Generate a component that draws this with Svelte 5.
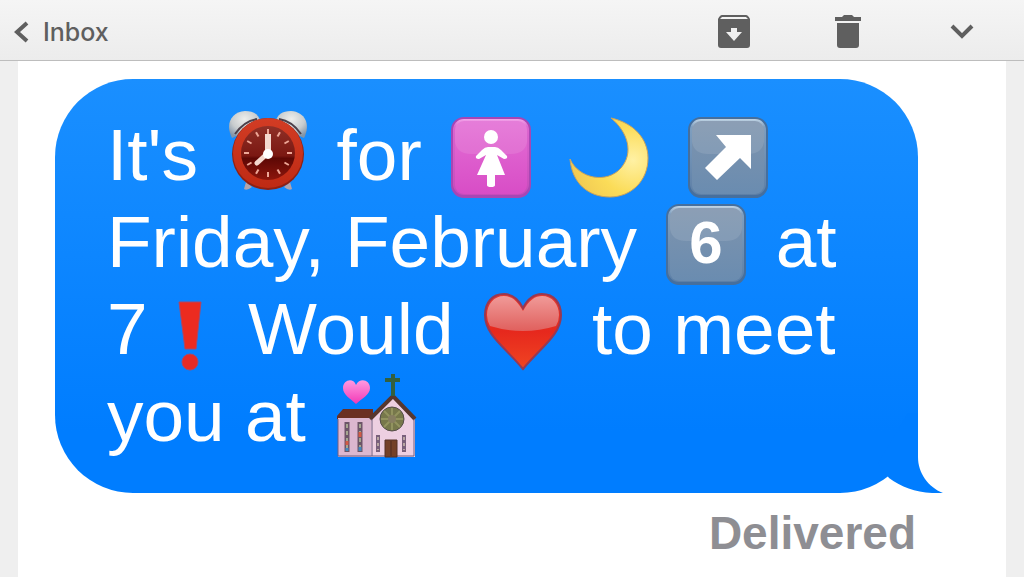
<script lang="ts">
type TileKind = "pink" | "slate";
</script>

{#snippet tile(kind: TileKind)}
    <rect x="8" y="1" width="80" height="81" rx="13" fill={kind === "pink" ? "#a746b5" : "#466f9d"} />
    <rect x="10" y="3" width="76" height="76" rx="11" fill="url(#{kind}-border)" />
    <rect x="12" y="5" width="72" height="73" rx="9" fill="url(#{kind}-fill)" />
    <path d="M21 5H75Q84 5 84 14V26Q82 38 68 38H28Q14 38 12 26V14Q12 5 21 5Z" fill="#fff" opacity="0.1" />
{/snippet}

<svg class="defs" width="0" height="0" aria-hidden="true">
    <defs>
        <linearGradient id="pink-border" x2="0" y2="1">
            <stop offset="0" stop-color="#f3a6ea" />
            <stop offset="0.1" stop-color="#dc66d0" />
            <stop offset="1" stop-color="#c64bbb" />
        </linearGradient>
        <linearGradient id="pink-fill" x2="0" y2="1">
            <stop offset="0" stop-color="#e36fd5" />
            <stop offset="1" stop-color="#d84dc6" />
        </linearGradient>
        <linearGradient id="slate-border" x2="0" y2="1">
            <stop offset="0" stop-color="#c2d5e5" />
            <stop offset="0.1" stop-color="#7f9fc0" />
            <stop offset="1" stop-color="#5d7fa6" />
        </linearGradient>
        <linearGradient id="slate-fill" x2="0" y2="1">
            <stop offset="0" stop-color="#7f94ad" />
            <stop offset="1" stop-color="#6a8cb0" />
        </linearGradient>
        <radialGradient id="bell" cx="0.5" cy="0.3" r="0.7">
            <stop offset="0" stop-color="#eeeeec" />
            <stop offset="0.6" stop-color="#c8ccce" />
            <stop offset="1" stop-color="#8395a8" />
        </radialGradient>
        <linearGradient id="clock-rim" x2="0" y2="1">
            <stop offset="0" stop-color="#d23c24" />
            <stop offset="1" stop-color="#bf2a14" />
        </linearGradient>
        <linearGradient id="clock-face" x2="0" y2="1">
            <stop offset="0" stop-color="#8f3027" />
            <stop offset="0.55" stop-color="#7b1812" />
            <stop offset="0.6" stop-color="#5d0805" />
            <stop offset="1" stop-color="#8d160c" />
        </linearGradient>
        <radialGradient id="moon" gradientUnits="userSpaceOnUse" cx="72" cy="44" r="68">
            <stop offset="0" stop-color="#fff1a4" />
            <stop offset="0.5" stop-color="#fbdc58" />
            <stop offset="1" stop-color="#eec552" />
        </radialGradient>
        <linearGradient id="heart" x2="0" y2="1">
            <stop offset="0" stop-color="#e33a31" />
            <stop offset="0.5" stop-color="#e6281d" />
            <stop offset="1" stop-color="#f04522" />
        </linearGradient>
        <linearGradient id="heart-shine" x2="0" y2="1">
            <stop offset="0" stop-color="#f09a98" />
            <stop offset="1" stop-color="#e0605d" />
        </linearGradient>
        <linearGradient id="love" x2="0" y2="1">
            <stop offset="0" stop-color="#ff9ae0" />
            <stop offset="1" stop-color="#f238b6" />
        </linearGradient>
    </defs>
</svg>

<div class="mail">
    <header class="toolbar">
        <a class="back" href="#inbox">
            <svg width="15" height="22" viewBox="0 0 15 22" aria-hidden="true">
                <path d="M13 2L3 11L13 20" fill="none" stroke="#5f5f5f" stroke-width="4" />
            </svg>
            <span>Inbox</span>
        </a>
        <div class="actions">
            <button type="button" aria-label="Archive">
                <svg width="34" height="34" viewBox="0 0 34 34">
                    <path
                        fill="#5f5f5f"
                        fill-rule="evenodd"
                        d="M5 0H29Q31 0 33 4V30Q33 33 30 33H4Q1 33 1 30V4Q3 0 5 0ZM5 2L3 4H31L29 2ZM14 13V17H9L17 26L25 17H20V13Z"
                    />
                </svg>
            </button>
            <button type="button" aria-label="Delete">
                <svg width="26" height="34" viewBox="0 0 26 34">
                    <path
                        fill="#5f5f5f"
                        d="M0 2H7L9 0H17L19 2H26V6H0ZM2 8H24V30Q24 33 21 33H5Q2 33 2 30Z"
                    />
                </svg>
            </button>
            <button type="button" aria-label="More">
                <svg width="24" height="16" viewBox="0 0 24 16">
                    <path d="M2 2L12 12L22 2" fill="none" stroke="#5f5f5f" stroke-width="4" />
                </svg>
            </button>
        </div>
    </header>

    <main class="page">
        <div class="bubble">
            <p>
                It's
                <svg class="emoji" viewBox="0 0 96 80" role="img" aria-label="alarm clock">
                    <path d="M27 66L25 73Q28 75 33 71ZM71 66L73 73Q70 75 65 71Z" fill="#b3a4ad" />
                    <path d="M13 22C6 8 12-4 26-5C35-5 40-1 41 5L22 18Z" fill="url(#bell)" />
                    <path d="M85 22C92 8 86-4 72-5C63-5 58-1 57 5L76 18Z" fill="url(#bell)" />
                    <path d="M16 18Q25 5 38 3M82 18Q73 5 60 3" fill="none" stroke="#4c404a" stroke-width="2" />
                    <circle cx="49" cy="38" r="36" fill="#8f2013" />
                    <circle cx="49" cy="37" r="35" fill="url(#clock-rim)" />
                    <circle cx="49" cy="37" r="27" fill="url(#clock-face)" />
                    <g stroke="#eea797" stroke-width="2">
                        {#each Array(12) as _, i}
                            <path d="M49 13V18" transform="rotate({i * 30} 49 37)" />
                        {/each}
                    </g>
                    <path d="M49 38V18" stroke="#f4d9cf" stroke-width="6" />
                    <path d="M49 37L38 47" stroke="#f4d9cf" stroke-width="5" stroke-linecap="round" />
                    <circle cx="49" cy="38" r="5" fill="#fff" />
                </svg>
                for
                <svg class="emoji" viewBox="0 0 96 80" role="img" aria-label="women">
                    {@render tile("pink")}
                    <circle cx="48" cy="21" r="7" fill="#fff" />
                    <path
                        fill="#fff"
                        d="M45 31H52Q55 31 58 34L64 40Q65 43 61 43L54 39L62 59H52V69Q52 71 48 71Q44 71 44 69V59H34L43 39L36 43Q32 43 33 40L39 34Q42 31 45 31Z"
                    />
                </svg>
                <svg class="emoji" viewBox="0 0 96 80" role="img" aria-label="crescent moon">
                    <path
                        d="M50 2C73 7 87 23 87 42C87 65 70 81 49 81C27 81 11 67 9 43C18 63 46 68 60 52C73 37 67 16 50 2Z"
                        fill="url(#moon)"
                        stroke="#c9a35c"
                        stroke-width="1"
                    />
                </svg>
                <svg class="emoji" viewBox="0 0 96 80" role="img" aria-label="up right arrow">
                    {@render tile("slate")}
                    <path d="M36 19H71V53L60 42L37 64L25 52L46 31Z" fill="#fff" />
                </svg>
                <br />
                Friday, February
                <svg class="emoji" viewBox="0 0 96 80" role="img" aria-label="keycap 6">
                    {@render tile("slate")}
                    <text class="keycap" x="48" y="60" text-anchor="middle">6</text>
                </svg>
                at
                <br />
                7<svg class="emoji narrow" viewBox="2 0 80 80" role="img" aria-label="exclamation mark">
                    <path d="M33 12H55L50 59H39Z" fill="#ec2b20" stroke="#a94868" stroke-width="1" />
                    <circle cx="44" cy="72" r="8" fill="#e52b26" stroke="#a94868" stroke-width="1" />
                </svg>
                Would
                <svg class="emoji" viewBox="0 0 96 80" role="img" aria-label="heart">
                    <path
                        d="M48 18C53 8 60 4 67 4C79 4 86 13 86 25C86 45 66 57 48 79C30 57 10 45 10 25C10 13 17 4 29 4C36 4 43 8 48 18Z"
                        fill="url(#heart)"
                        stroke="#973953"
                        stroke-width="2"
                    />
                    <path
                        d="M48 21C54 10 60 6 67 6C77 6 84 14 84 25Q84 31 81 36Q48 46 15 36Q12 31 12 25C12 14 19 6 29 6C36 6 42 10 48 21Z"
                        fill="url(#heart-shine)"
                    />
                </svg>
                to meet
                <br />
                you at
                <svg class="emoji" viewBox="0 0 96 80" role="img" aria-label="wedding church">
                    <path d="M16 32H46V42H10V39Z" fill="#6a3023" />
                    <path d="M11 41H47V80H11Z" fill="#dcb7cf" />
                    <path d="M66 17L88 41V80H44V41Z" fill="#edcfe1" />
                    <path d="M43 42L66 19L88 42" fill="none" stroke="#57372f" stroke-width="4" />
                    <path d="M11 42V79H45M45 42V79M87 42V79H45" fill="none" stroke="#705f80" stroke-width="1" />
                    <path d="M66 19V-3M58 3H73" stroke="#33603f" stroke-width="4" />
                    <circle cx="65" cy="42" r="12" fill="#77784b" stroke="#564e4b" stroke-width="1" />
                    <path
                        d="M65 31V53M54 42H76M57 34L73 50M73 34L57 50"
                        stroke="#92935f"
                        stroke-width="2"
                    />
                    <circle cx="65" cy="42" r="4" fill="#877e61" />
                    <path d="M20 45V75M33 45V75" stroke="#6c5567" stroke-width="5" />
                    <path d="M20 47V73M33 47V73" stroke="#a5a58f" stroke-width="2" stroke-dasharray="4 3" />
                    <path d="M20 64V68M33 55V60" stroke="#d25b45" stroke-width="3" />
                    <path d="M20 71V74M33 70V74" stroke="#4388bd" stroke-width="3" />
                    <path d="M51 58V75M77 58V75" stroke="#79607b" stroke-width="4" />
                    <path d="M51 60V73M77 60V73" stroke="#b8a6a2" stroke-width="2" stroke-dasharray="3 3" />
                    <path d="M58 63H70V80H58Z" fill="#744027" stroke="#543026" stroke-width="1" />
                    <path d="M64 64V79" stroke="#4f2a20" stroke-width="1" />
                    <path
                        d="M29 8C33 0 43 3 43 11C43 18 35 21 29 27C23 21 16 18 16 11C16 3 26 0 29 8Z"
                        fill="url(#love)"
                    />
                </svg>
            </p>
            <svg class="tail" width="85" height="80" viewBox="0 0 85 80" aria-hidden="true">
                <path d="M50 0H60V44C60 60 70 74 85 80C62 81 46 76 31 65L20 50Z" fill="#007dff" />
            </svg>
        </div>
        <div class="status">Delivered</div>
    </main>
</div>

<style>
    :global(body) {
        background: #efefef;
    }

    .defs {
        position: absolute;
    }

    .mail {
        min-height: 100vh;
        display: flex;
        flex-direction: column;
        font-family: "Liberation Sans", Arial, sans-serif;
    }

    .toolbar {
        height: 60px;
        display: flex;
        align-items: center;
        justify-content: space-between;
        padding: 0 5px 0 14px;
        background: linear-gradient(#f5f5f5, #ececec);
        border-bottom: 1px solid #bdbdbd;
    }

    .back {
        display: flex;
        align-items: center;
        gap: 14px;
        padding-top: 4px;
        color: #5f5f5f;
        font-family: Inter, "Liberation Sans", sans-serif;
        font-size: 25px;
        font-weight: 500;
        line-height: 32px;
        text-decoration: none;
    }

    .actions {
        display: flex;
    }

    button {
        width: 114px;
        height: 60px;
        display: flex;
        align-items: center;
        justify-content: center;
        padding: 4px 0 0;
        border: 0;
        background: none;
        cursor: pointer;
    }

    .page {
        flex-grow: 1;
        margin: 0 18px;
        padding: 18px 88px 0 37px;
        background: #fff;
    }

    .bubble {
        position: relative;
        padding: 32px 0 34px 52px;
        border-radius: 78px;
        background: linear-gradient(#1a8fff, #007dff 85%);
        color: #fff;
    }

    p {
        margin: 0;
        font-size: 73px;
        line-height: 87px;
        white-space: nowrap;
    }

    .emoji {
        width: 98px;
        height: 80px;
        vertical-align: -16px;
        overflow: visible;
    }

    .narrow {
        width: 80px;
    }

    .keycap {
        fill: #fff;
        font-size: 60px;
        font-weight: 700;
    }

    .tail {
        position: absolute;
        right: -25px;
        bottom: 0;
    }

    .status {
        margin-top: 14px;
        padding-right: 2px;
        color: #8e8e93;
        font-size: 46px;
        font-weight: 700;
        line-height: 52px;
        text-align: right;
    }
</style>
